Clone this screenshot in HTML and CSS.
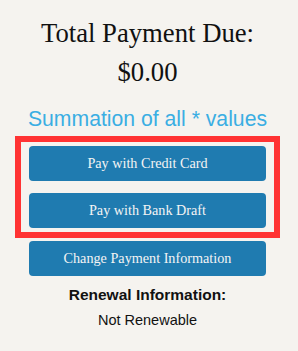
FILE: index.html
```html
<!DOCTYPE html>
<html lang="en">
<head>
    <meta charset="UTF-8">
    <meta name="viewport" content="width=device-width, initial-scale=1.0">
    <title>Payment</title>
    <link rel="stylesheet" href="styles.css">
</head>
<body>
    <div class="payment-panel">
        <h2 class="total-title">Total Payment Due:<br>$0.00</h2>
        <p class="summation">Summation of all * values</p>

        <div class="pay-options">
            <button class="pay-button">Pay with Credit Card</button>
            <button class="pay-button">Pay with Bank Draft</button>
        </div>

        <button class="pay-button change-button">Change Payment Information</button>

        <div class="renewal">
            <h4>Renewal Information:</h4>
            <p>Not Renewable</p>
        </div>
    </div>
</body>
</html>
```

FILE: styles.css
```css
body {
    margin: 0;
    padding: 0;
    background-color: #f5f3ef;
    font-family: "Liberation Sans", Arial, sans-serif;
    color: #111;
}

.payment-panel {
    width: 265px;
    margin-left: 15px;
    padding-top: 14px;
    text-align: center;
}

.total-title {
    margin: 0;
    font-family: "Liberation Serif", "Times New Roman", serif;
    font-size: 26.7px;
    font-weight: normal;
    line-height: 39px;
}

.summation {
    margin: 14px 0 0 0;
    font-size: 21.2px;
    line-height: 26px;
    color: #3aaee3;
}

.pay-options {
    display: flex;
    flex-direction: column;
    gap: 12px;
    margin-top: 4px;
    padding: 4px 8px;
    border: 6px solid #ff3333;
}

.pay-button {
    display: block;
    width: 237px;
    height: 35px;
    margin: 0;
    padding: 0;
    border: none;
    border-radius: 4px;
    background-color: #1f7bb0;
    color: #f4f4f4;
    font-family: "Liberation Serif", "Times New Roman", serif;
    font-size: 14.2px;
    cursor: pointer;
}

.change-button {
    margin: 3px auto 0 14px;
}

.renewal h4 {
    margin: 8px 0 0 0;
    font-size: 15.5px;
    line-height: 22px;
}

.renewal p {
    margin: 4px 0 0 0;
    font-size: 14.5px;
    line-height: 20px;
}
```
